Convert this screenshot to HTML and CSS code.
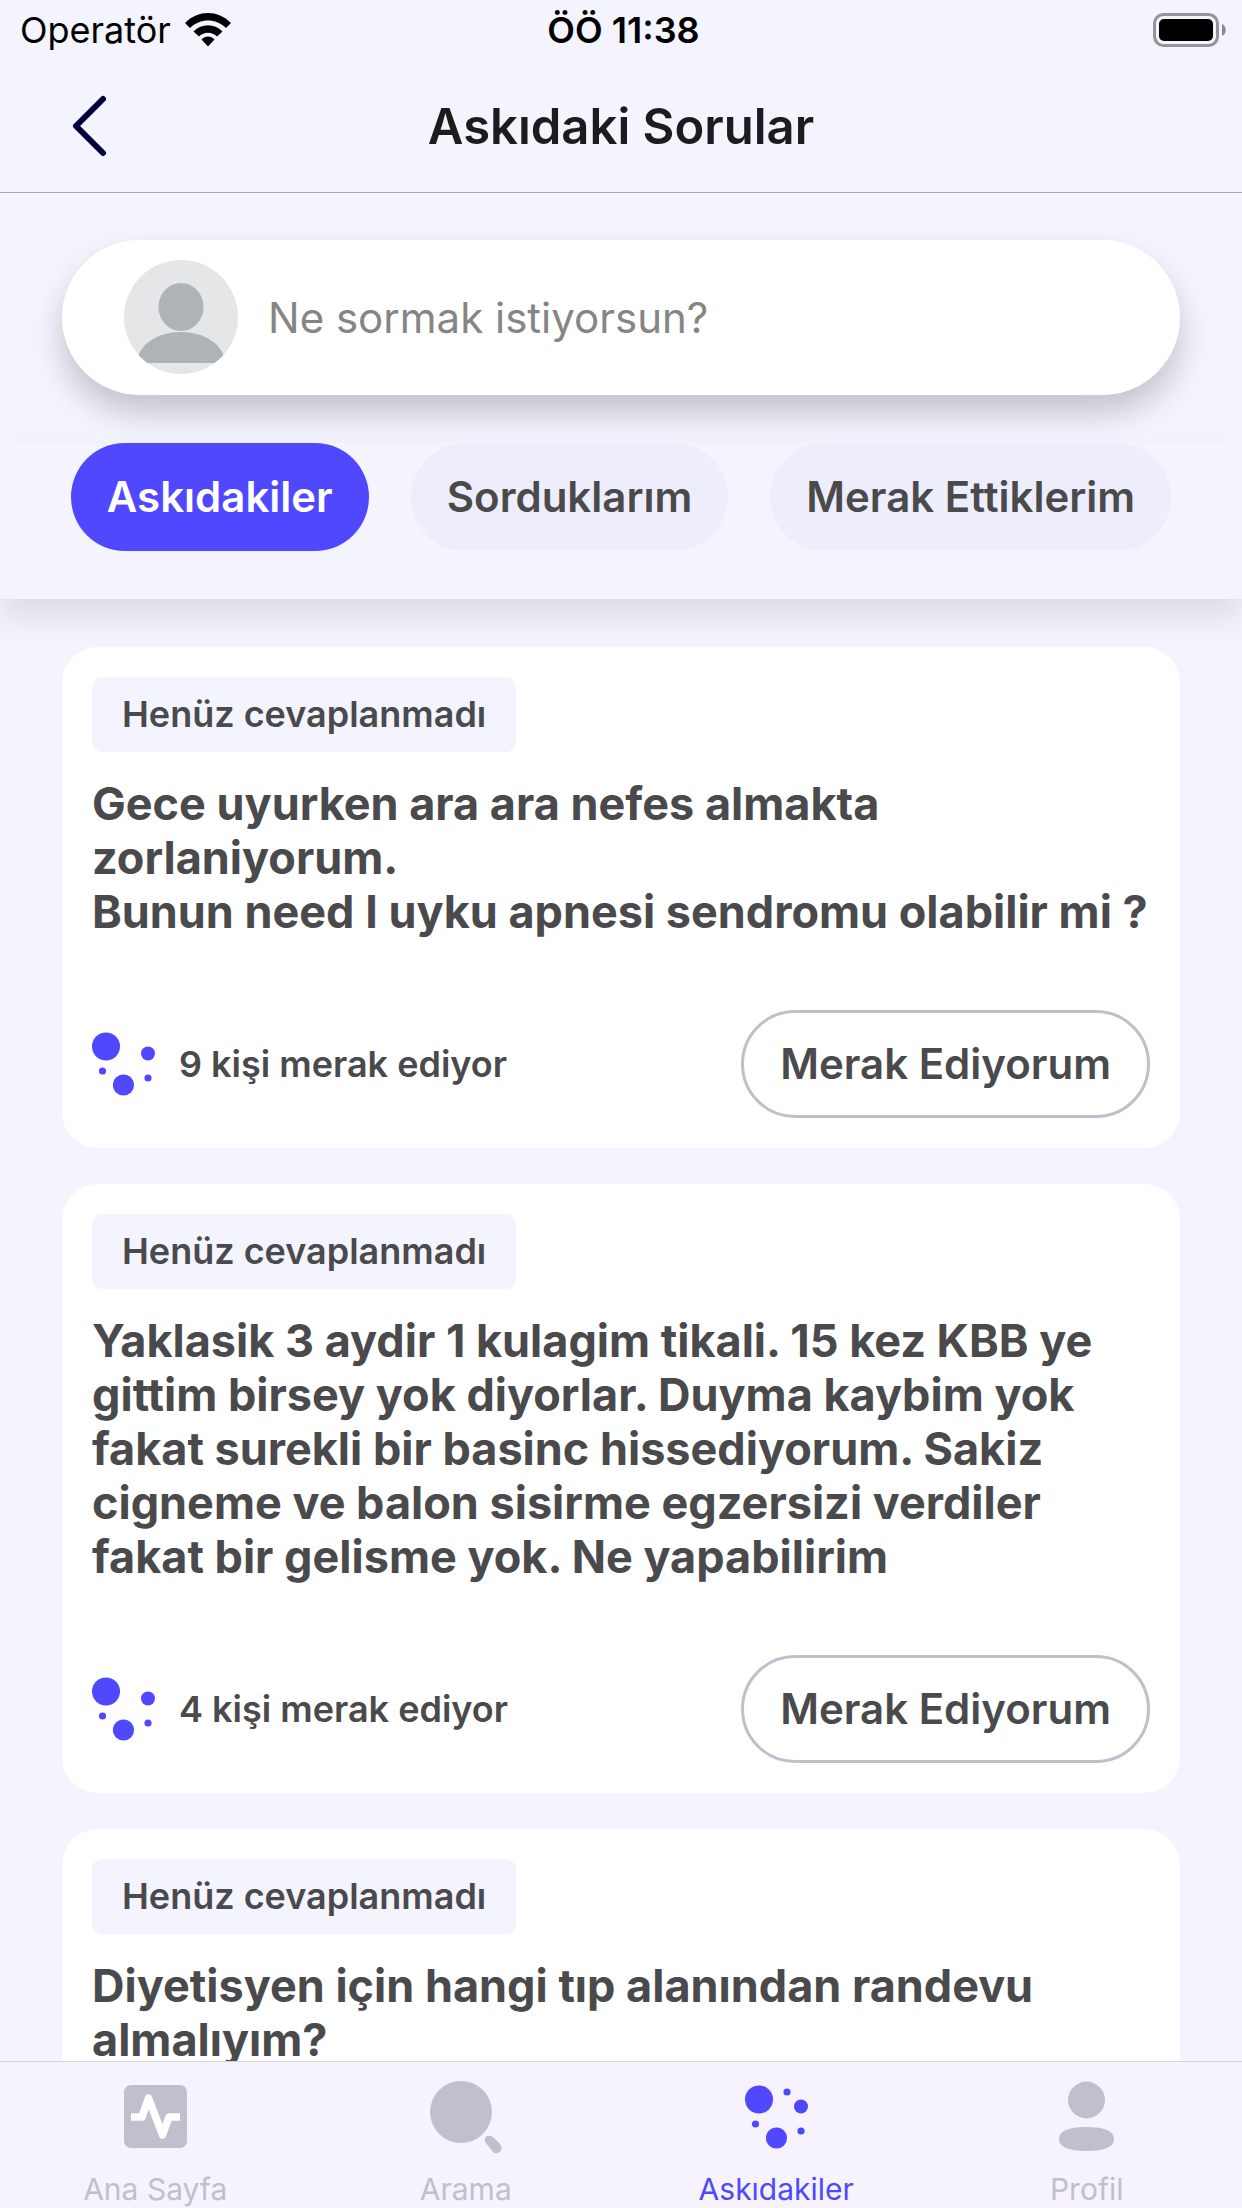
FILE: index.html
```html
<!DOCTYPE html>
<html lang="tr">
<head>
  <meta charset="UTF-8">
  <meta name="viewport" content="width=device-width, initial-scale=1">
  <title>Askıdaki Sorular</title>
  <link rel="stylesheet" href="styles.css">
</head>
<body>
  <!-- shared dots icon -->
  <svg class="defs" width="0" height="0" aria-hidden="true">
    <symbol id="dots" viewBox="0 0 64 64">
      <circle cx="14" cy="14.5" r="14"/>
      <circle cx="56" cy="21.5" r="7"/>
      <circle cx="10.5" cy="39" r="3.6"/>
      <circle cx="31.5" cy="53" r="10.6"/>
      <circle cx="56" cy="46" r="3.6"/>
    </symbol>
  </svg>

  <div class="status-bar">
    <div class="status-left">
      <span>Operatör</span>
      <svg width="46" height="34" viewBox="0 0 46 34" aria-hidden="true">
        <path d="M0 10 C13-3.300 33-3.300 46 10 L41 15 C31 5 15 5 5 15 Z"/>
        <path d="M8.500 18.500 C16.500 10 29.500 10 37.500 18.500 L32 23.500 C27 18.500 19 18.500 14 23.500 Z"/>
        <path d="M16.500 26.500 C20 22.500 26 22.500 29.500 26.500 L23 33.500 Z"/>
      </svg>
    </div>
    <span class="clock">ÖÖ 11:38</span>
    <div class="status-right">
      <svg width="74" height="36" viewBox="0 0 74 36" aria-hidden="true">
        <rect x="1.500" y="2.500" width="63" height="31" rx="9" fill="none" stroke="#939399" stroke-width="3"/>
        <rect x="6" y="7" width="54" height="22" rx="5"/>
        <path d="M69 12 C74 14 74 22 69 24 Z" fill="#8a8a90"/>
      </svg>
    </div>
  </div>

  <header class="header">
    <button class="back" type="button" aria-label="Geri">
      <svg width="36" height="62" viewBox="0 0 36 62" aria-hidden="true">
        <path d="M31 4 L4 31 L31 58" fill="none" stroke="#00003c" stroke-width="6" stroke-linecap="round" stroke-linejoin="round"/>
      </svg>
    </button>
    <h1>Askıdaki Sorular</h1>
  </header>

  <form class="search">
    <label class="search-box">
      <svg class="avatar" width="114" height="114" viewBox="0 0 114 114" aria-hidden="true">
        <clipPath id="round"><circle cx="57" cy="57" r="57"/></clipPath>
        <g clip-path="url(#round)">
          <rect width="114" height="114" fill="#e4e6e7"/>
          <ellipse cx="57" cy="47" rx="22.500" ry="24"/>
          <path d="M13 103 C14 84 34 72 57 72 C80 72 100 84 101 103 Z"/>
        </g>
      </svg>
      <input type="text" placeholder="Ne sormak istiyorsun?">
    </label>
  </form>

  <div class="tabs">
    <button class="tab active" type="button">Askıdakiler</button>
    <button class="tab" type="button">Sorduklarım</button>
    <button class="tab" type="button">Merak Ettiklerim</button>
  </div>

  <main class="list">
    <article class="card">
      <span class="badge">Henüz cevaplanmadı</span>
      <p class="question">Gece uyurken ara ara nefes almakta zorlaniyorum.<br>Bunun need I uyku apnesi sendromu olabilir mi ?</p>
      <div class="card-footer">
        <svg class="dots" width="64" height="64" aria-hidden="true"><use href="#dots"/></svg>
        <span class="count">9 kişi merak ediyor</span>
        <button class="follow" type="button">Merak Ediyorum</button>
      </div>
    </article>

    <article class="card">
      <span class="badge">Henüz cevaplanmadı</span>
      <p class="question">Yaklasik 3 aydir 1 kulagim tikali. 15 kez KBB ye gittim birsey yok diyorlar. Duyma kaybim yok fakat surekli bir basinc hissediyorum. Sakiz cigneme ve balon sisirme egzersizi verdiler fakat bir gelisme yok. Ne yapabilirim</p>
      <div class="card-footer">
        <svg class="dots" width="64" height="64" aria-hidden="true"><use href="#dots"/></svg>
        <span class="count">4 kişi merak ediyor</span>
        <button class="follow" type="button">Merak Ediyorum</button>
      </div>
    </article>

    <article class="card">
      <span class="badge">Henüz cevaplanmadı</span>
      <p class="question">Diyetisyen için hangi tıp alanından randevu almalıyım?</p>
    </article>
  </main>

  <nav class="bottom-nav">
    <a href="#">
      <svg width="84" height="84" viewBox="0 0 84 84" aria-hidden="true">
        <rect x="11" y="10" width="63" height="63" rx="7"/>
        <path d="M18 42 H29 L35.500 23 L49.500 60 L56 42 H67" fill="none" stroke="#fff" stroke-width="7.500" stroke-linejoin="round"/>
      </svg>
      <span>Ana Sayfa</span>
    </a>
    <a href="#">
      <svg width="84" height="84" viewBox="0 0 84 84" aria-hidden="true">
        <circle cx="37" cy="37" r="31"/>
        <path d="M61.500 67.500 C59 62 64 59 69 62 L76 69 C81 74 74 81 69 77 Z"/>
      </svg>
      <span>Arama</span>
    </a>
    <a class="active" href="#">
      <svg width="84" height="84" viewBox="0 0 84 84" aria-hidden="true">
        <use href="#dots" x="11" y="10" width="64" height="64"/>
        <circle cx="53" cy="17" r="3.600"/>
      </svg>
      <span>Askıdakiler</span>
    </a>
    <a href="#">
      <svg width="84" height="84" viewBox="0 0 84 84" aria-hidden="true">
        <circle cx="41.500" cy="25" r="18.500"/>
        <path d="M14 64 C14 56 23 52 41.500 52 C60 52 69 56 69 64 C69 72 60 76 41.500 76 C23 76 14 72 14 64 Z"/>
      </svg>
      <span>Profil</span>
    </a>
  </nav>
</body>
</html>
```
FILE: styles.css
```css
* {
  box-sizing: border-box;
}
body {
  margin: 0;
  height: 100vh;
  display: flex;
  flex-direction: column;
  overflow: hidden;
  background: #f4f4ff;
  color: #4a4a4c;
  font-family: Inter, "Liberation Sans", sans-serif;
}
button, input {
  font-family: inherit;
  color: inherit;
  border: none;
  background: none;
}
button {
  cursor: pointer;
}
.defs {
  position: absolute;
}

/* Status bar */
.status-bar {
  display: grid;
  grid-template-columns: 1fr auto 1fr;
  align-items: center;
  height: 60px;
  padding: 0 15px 0 20px;
  color: #000;
  font-size: 36px;
}
.status-left {
  display: flex;
  align-items: center;
  gap: 14px;
}
.status-right {
  display: flex;
  justify-content: flex-end;
}
.clock {
  font-weight: 600;
}

/* Header */
.header {
  display: grid;
  grid-template-columns: 1fr auto 1fr;
  align-items: center;
  height: 133px;
  padding: 0 66px;
  border-bottom: 1px solid #a9a9b1;
}
.header h1 {
  margin: 0;
  color: #1c1c1e;
  font-size: 49px;
  font-weight: 600;
}
.back {
  display: flex;
  justify-self: start;
  padding: 0 6px;
}

/* Search */
.search {
  padding: 47px 62px 48px;
}
.search-box {
  display: flex;
  align-items: center;
  gap: 30px;
  padding: 20px 62px 21px;
  border-radius: 78px;
  background: #fff;
  box-shadow: 0 18px 32px rgba(0, 0, 0, 0.2);
}
.avatar {
  flex: none;
  display: block;
  fill: #aeb3b7;
}
.search-box input {
  flex: 1;
  min-width: 0;
  padding: 0;
  font-size: 42px;
  outline: none;
}
.search-box input::placeholder {
  color: #858585;
}

/* Tabs */
.tabs {
  position: relative;
  z-index: 1;
  display: flex;
  justify-content: center;
  gap: 42px;
  padding-bottom: 48px;
  background: #f4f4ff;
  box-shadow: 0 18px 32px rgba(0, 0, 0, 0.1);
}
.tab {
  padding: 28px 36px;
  border-radius: 54px;
  background: #eeedfb;
  font-size: 42px;
  font-weight: 600;
  line-height: 52px;
}
.tab.active {
  background: #4f48ff;
  color: #fff;
}

/* Questions */
.list {
  flex: 1;
  min-height: 0;
  overflow: hidden;
  display: flex;
  flex-direction: column;
  gap: 36px;
  padding: 48px 62px 0;
}
.card {
  flex: none;
  padding: 30px;
  border-radius: 36px;
  background: #fff;
}
.badge {
  display: block;
  width: fit-content;
  padding: 15px 30px;
  border-radius: 10px;
  background: #f4f4ff;
  font-size: 36px;
  font-weight: 600;
  line-height: 45px;
}
.question {
  margin: 25px 0 0;
  font-size: 45px;
  font-weight: 700;
  line-height: 54px;
}
.card-footer {
  display: flex;
  align-items: center;
  gap: 23px;
  margin-top: 71px;
}
.dots {
  flex: none;
  fill: #4f48ff;
}
.count {
  flex: 1;
  font-size: 36px;
  font-weight: 600;
}
.follow {
  padding: 25px 36px;
  border: 3px solid #c1bfcd;
  border-radius: 54px;
  font-size: 42px;
  font-weight: 600;
  line-height: 52px;
}

/* Bottom nav */
.bottom-nav {
  flex: none;
  display: grid;
  grid-template-columns: repeat(4, 1fr);
  height: 147px;
  padding-top: 13px;
  border-top: 1px solid #d5d4da;
  background: #f6f3ff;
}
.bottom-nav a {
  display: flex;
  flex-direction: column;
  align-items: center;
  gap: 12px;
  color: #c1bfcd;
  fill: #c1bfcd;
  font-size: 30px;
  line-height: 36px;
  text-decoration: none;
}
.bottom-nav svg {
  flex: none;
}
.bottom-nav .active {
  color: #4f48ff;
  fill: #4f48ff;
}
```
